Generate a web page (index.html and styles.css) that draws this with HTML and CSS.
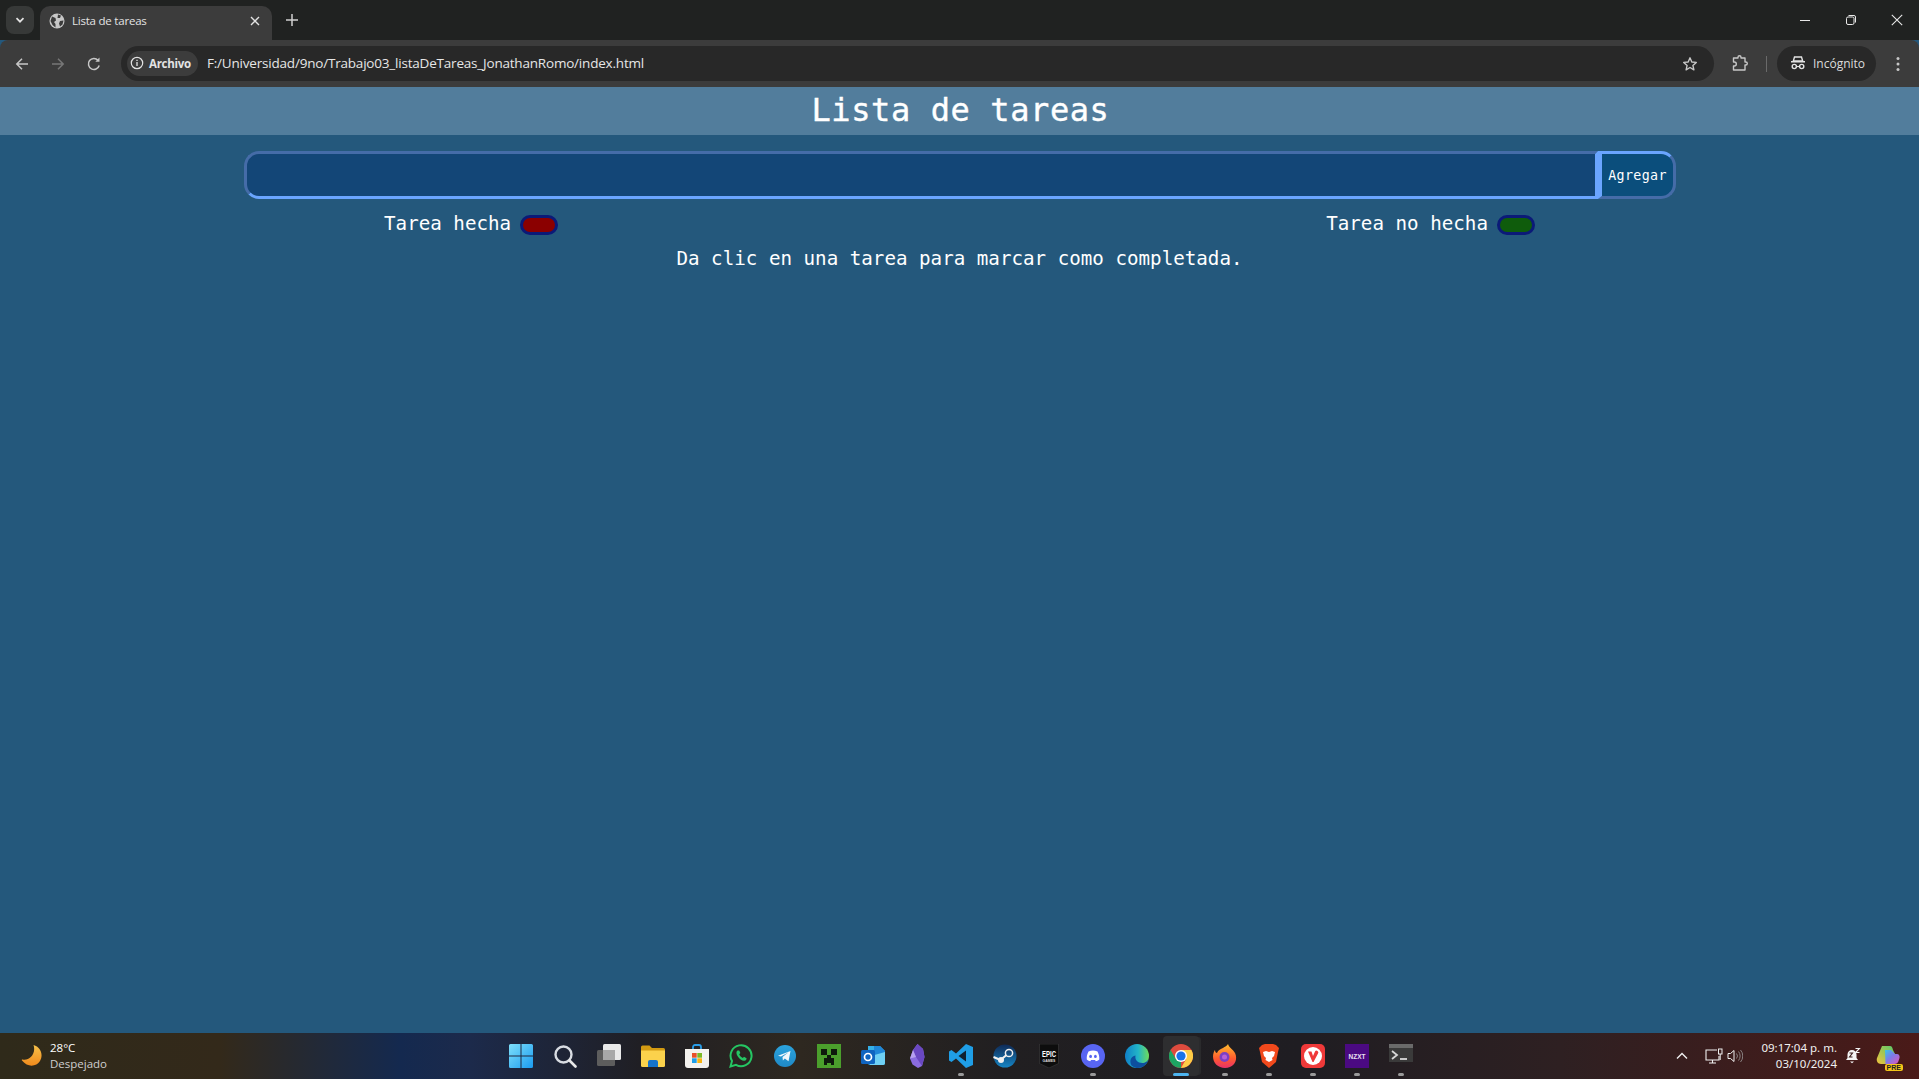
FILE: index.html
```html
<!DOCTYPE html>
<html lang="es">
<head>
<meta charset="utf-8">
<title>Lista de tareas</title>
<link rel="stylesheet" href="styles.css">
</head>
<body>
<div class="tabstrip">
  <div class="tablist"><svg width="12" height="12" viewBox="0 0 12 12"><path d="M2.5 4.2 6 7.7l3.5-3.5" fill="none" stroke="#e3e3e3" stroke-width="1.7"/></svg></div>
  <div class="tab">
    <svg class="favicon" width="16" height="16" viewBox="0 0 16 16"><circle cx="8" cy="8" r="7.5" fill="#c7c7c7"/><path d="M3 3.500 6.500 5 7 7.500 5 9l1.500 2v3.500L3.500 12 1.500 8zM9 1.500l3 1-1 2.500H8.500zM11 8l3.500-.5-1 4-2.500 2-1-3z" fill="#3c3c3c"/></svg>
    <span class="tab-title">Lista de tareas</span>
    <svg class="tab-close" width="10" height="10" viewBox="0 0 10 10"><path d="M1 1l8 8M9 1l-8 8" stroke="#e3e3e3" stroke-width="1.400"/></svg>
  </div>
  <svg class="newtab" width="12" height="12" viewBox="0 0 12 12"><path d="M6 0v12M0 6h12" stroke="#d0d0d0" stroke-width="1.500"/></svg>
  <div class="winctrl">
    <svg width="12" height="12" viewBox="0 0 12 12"><path d="M1 6.500h10" stroke="#e8e8e8"/></svg>
    <svg width="12" height="12" viewBox="0 0 12 12"><rect x="1.500" y="3" width="7.500" height="7.500" rx="1.500" fill="none" stroke="#e8e8e8"/><path d="M3.500 1.500h5.500a1.500 1.500 0 0 1 1.500 1.500v5.500" fill="none" stroke="#e8e8e8"/></svg>
    <svg width="12" height="12" viewBox="0 0 12 12"><path d="M.8.800l10.400 10.400M11.200.800.800 11.200" stroke="#e8e8e8" stroke-width="1.100"/></svg>
  </div>
</div>
<div class="toolbar">
  <svg class="navbtn" width="16" height="16" viewBox="0 0 16 16"><path d="M14 8H3M8 2.800 2.800 8 8 13.200" fill="none" stroke="#c7c7c7" stroke-width="1.500"/></svg>
  <svg class="navbtn" width="16" height="16" viewBox="0 0 16 16"><path d="M2 8h11M8 2.800 13.200 8 8 13.200" fill="none" stroke="#777" stroke-width="1.500"/></svg>
  <svg class="navbtn" width="16" height="16" viewBox="0 0 16 16"><path d="M13.200 9.500A5.500 5.500 0 1 1 12 4.200" fill="none" stroke="#c7c7c7" stroke-width="1.500"/><path d="M13.500 1.500v4.200H9.300z" fill="#c7c7c7"/></svg>
  <div class="omnibox">
    <div class="chip">
      <svg width="14" height="14" viewBox="0 0 14 14"><circle cx="7" cy="7" r="5.700" fill="none" stroke="#e3e3e3" stroke-width="1.200"/><path d="M7 6v4M7 3.800v1.300" stroke="#e3e3e3" stroke-width="1.300"/></svg>
      <span>Archivo</span>
    </div>
    <span class="url">F:/Universidad/9no/Trabajo03_listaDeTareas_JonathanRomo/index.html</span>
    <svg class="star" width="16" height="16" viewBox="0 0 16 16"><path d="M8 1.800 9.800 6l4.500.4-3.400 3 1 4.400L8 11.500l-3.900 2.300 1-4.400-3.400-3L6.200 6z" fill="none" stroke="#c7c7c7" stroke-width="1.400" stroke-linejoin="round"/></svg>
  </div>
  <svg class="ext" width="18" height="18" viewBox="0 0 18 18"><path d="M2.500 3.500H7V2.800a1.500 1.500 0 0 1 3 0v.7h4v4h.8a1.500 1.500 0 0 1 0 3H14v5H2.500v-4h.8a2 2 0 0 0 0-4h-.8z" transform="translate(0 -.5)" fill="none" stroke="#c7c7c7" stroke-width="1.400" stroke-linejoin="round"/></svg>
  <div class="sep"></div>
  <div class="incognito">
    <svg width="16" height="16" viewBox="0 0 16 16"><path d="M4.500 2h7l1.200 4H3.300zM1 6.800h14" fill="none" stroke="#e3e3e3" stroke-width="1.400"/><circle cx="4.300" cy="11.500" r="2.100" fill="none" stroke="#e3e3e3" stroke-width="1.400"/><circle cx="11.700" cy="11.500" r="2.100" fill="none" stroke="#e3e3e3" stroke-width="1.400"/><path d="M6.400 11.500h3.200" stroke="#e3e3e3" stroke-width="1.200"/></svg>
    <span>Incógnito</span>
  </div>
  <svg class="menu" width="4" height="16" viewBox="0 0 4 16"><circle cx="2" cy="2.500" r="1.500" fill="#c7c7c7"/><circle cx="2" cy="8" r="1.500" fill="#c7c7c7"/><circle cx="2" cy="13.500" r="1.500" fill="#c7c7c7"/></svg>
</div>

<main class="page">
  <header class="page-header"><h1>Lista de tareas</h1></header>
  <form class="task-form">
    <input class="task-input" type="text">
    <button class="task-add" type="button">Agregar</button>
  </form>
  <div class="legend">
    <div class="legend-item"><span class="legend-label">Tarea hecha</span><span class="pill pill-done"></span></div>
    <div class="legend-item"><span class="legend-label">Tarea no hecha</span><span class="pill pill-todo"></span></div>
  </div>
  <p class="hint">Da clic en una tarea para marcar como completada.</p>
</main>

<footer class="taskbar">
  <div class="weather">
    <svg width="24" height="24" viewBox="0 0 24 24"><defs><linearGradient id="moon" x1="0" y1="0" x2="0" y2="1"><stop offset="0" stop-color="#f6c14a"/><stop offset="1" stop-color="#f08a1c"/></linearGradient></defs><path d="M14.500 1C22 3 24.500 11 21 17c-3.500 5.500-12 7-18-.5-.5-.7 0-1 .7-.9C10 17 17.500 10 14.500 1z" fill="url(#moon)"/></svg>
    <div class="weather-text"><span class="temp">28°C</span><span class="cond">Despejado</span></div>
  </div>
  <div class="apps">
    <div class="app"><svg width="24" height="24" viewBox="0 0 24 24"><defs><linearGradient id="win" x1="0" y1="0" x2="1" y2="1"><stop offset="0" stop-color="#7fe0fb"/><stop offset="1" stop-color="#1a9bf0"/></linearGradient></defs><path d="M0 1.500A1.500 1.500 0 0 1 1.500 0h10v11.500H0zM12.500 0h10A1.500 1.500 0 0 1 24 1.500v10H12.500zM0 12.500h11.500V24h-10A1.500 1.500 0 0 1 0 22.500zM12.500 12.500H24v10a1.500 1.500 0 0 1-1.500 1.500h-10z" fill="url(#win)"/></svg></div>
    <div class="app"><svg width="24" height="24" viewBox="0 0 24 24"><circle cx="10.500" cy="10.500" r="8" fill="none" stroke="#d8dce2" stroke-width="2.400"/><path d="M16.500 16.500l6 6" stroke="#e8e8e8" stroke-width="2.600" stroke-linecap="round"/></svg></div>
    <div class="app"><svg width="24" height="24" viewBox="0 0 24 24"><rect x="6" y="0" width="18" height="16" rx="1.500" fill="#e9e9e9"/><rect x="0" y="6" width="18" height="16" rx="1.500" fill="#5d5d5d"/><rect x="6" y="6" width="12" height="10" fill="#a8a8a8"/></svg></div>
    <div class="app"><svg width="24" height="24" viewBox="0 0 24 24"><path d="M0 3a1.500 1.500 0 0 1 1.500-1.500h7L11 4h11.500A1.500 1.500 0 0 1 24 5.500V8H0z" fill="#d29a12"/><path d="M0 6.500h24v15a1.500 1.500 0 0 1-1.500 1.500h-21A1.500 1.500 0 0 1 0 21.500z" fill="#fbd24c"/><path d="M7 18a2 2 0 0 1 2-2h6a2 2 0 0 1 2 2v5H7z" fill="#1673c9"/></svg></div>
    <div class="app"><svg width="24" height="24" viewBox="0 0 24 24"><path d="M8 6V3a2 2 0 0 1 2-2h4a2 2 0 0 1 2 2v3" fill="none" stroke="#2a9ee8" stroke-width="1.800"/><path d="M0 5h24v16a3 3 0 0 1-3 3H3a3 3 0 0 1-3-3z" fill="#f4f2ee"/><rect x="7" y="9" width="4.700" height="4.700" fill="#e8502a"/><rect x="12.300" y="9" width="4.700" height="4.700" fill="#7cb925"/><rect x="7" y="14.300" width="4.700" height="4.700" fill="#1e9ee8"/><rect x="12.300" y="14.300" width="4.700" height="4.700" fill="#fbb40e"/></svg></div>
    <div class="app"><svg width="24" height="24" viewBox="0 0 24 24"><path d="M1.500 22.500l1.500-5.500a10.500 10.500 0 1 1 4 3.900z" fill="none" stroke="#25c663" stroke-width="2"/><path d="M8.500 6.500c-1.500 1-1.500 3.500.5 6.300 2 2.700 4.500 4.300 6.500 4 1.500-.3 2.300-1.500 2-2.600l-2.500-1.500-1.200 1.300c-1.500-.5-3-2.200-3.600-3.700l1.200-1.200-1.200-2.600z" fill="#25c663"/></svg></div>
    <div class="app"><svg width="24" height="24" viewBox="0 0 24 24"><defs><linearGradient id="tg" x1="0" y1="0" x2="0" y2="1"><stop offset="0" stop-color="#2ba3dd"/><stop offset="1" stop-color="#1f89c6"/></linearGradient></defs><circle cx="12" cy="12" r="11" fill="url(#tg)"/><path d="M5 11.800 17.500 7l-2 10.200-3.700-2.700-1.900 1.900-.4-3.300 6-4.800-7.500 4.300z" fill="#f2f7fb"/></svg></div>
    <div class="app"><svg width="24" height="24" viewBox="0 0 24 24"><rect width="24" height="24" fill="#4b9f2c"/><path d="M4 5h6v6H4zM14 5h6v6h-6zM10 11h4v3h3v7h-3v-2h-4v2H7v-7h3z" fill="#0e1a0c"/></svg></div>
    <div class="app"><svg width="24" height="24" viewBox="0 0 24 24"><path d="M7 2h12l5 5v12a2 2 0 0 1-2 2H9a2 2 0 0 1-2-2z" fill="#35b0e8"/><path d="M13 2h6l5 5v5H13z" fill="#1f86d8"/><path d="M10 12 24 8v11a2 2 0 0 1-2 2H9z" fill="#6fd0f4"/><rect x="0" y="6" width="14" height="14" rx="1.500" fill="#0f64c0"/><circle cx="7" cy="13" r="3.500" fill="none" stroke="#fff" stroke-width="1.700"/></svg></div>
    <div class="app"><svg width="24" height="24" viewBox="0 0 24 24"><path d="M12.500 0 18 5l1.500 8-2.500 9-4 2-5.500-3.500-2.500-6L8 6z" fill="#8b6ce0"/><path d="M12.500 0 8 6l3 7 6 9 2.500-9L18 5z" fill="#6a48c2"/><path d="M8 6l-3 8.500 6-1.500z" fill="#b7a0f0"/></svg></div>
    <div class="app app-open"><svg width="24" height="24" viewBox="0 0 24 24"><path d="M17 0l7 3v18l-7 3L7 14.500 2.500 18 0 16.500V7.500L2.500 6 7 9.500z" fill="#1f9ee6"/><path d="M17 6.500v11L9.500 12z" fill="#0f2130"/></svg></div>
    <div class="app"><svg width="24" height="24" viewBox="0 0 24 24"><defs><linearGradient id="st" x1="0" y1="0" x2="0" y2="1"><stop offset="0" stop-color="#0f2a56"/><stop offset="1" stop-color="#1685c4"/></linearGradient></defs><circle cx="12" cy="12" r="11.500" fill="url(#st)"/><circle cx="16" cy="9" r="3.600" fill="none" stroke="#f0f0f0" stroke-width="1.500"/><circle cx="8" cy="16" r="3" fill="#f0f0f0"/><path d="M.5 13l7 3 6-5" fill="none" stroke="#f0f0f0" stroke-width="2"/></svg></div>
    <div class="app"><svg width="24" height="24" viewBox="0 0 24 24"><path d="M2.500 0h19v19.500L12 24l-9.500-4.500z" fill="#0d0d0d" stroke="#444" stroke-width=".5"/><text x="12" y="8" class="epic" transform="scale(1 1.600)">EPIC</text><text x="12" y="17.500" class="epic-sub">GAMES</text></svg></div>
    <div class="app app-open"><svg width="24" height="24" viewBox="0 0 24 24"><circle cx="12" cy="12" r="12" fill="#5865f2"/><path d="M7.500 7.500c3-1.200 6-1.200 9 0 1.300 2.500 2 5 1.800 8-1.300 1-2.500 1.500-3.500 1.700l-.7-1.300H10l-.7 1.300c-1-.2-2.200-.7-3.500-1.700-.3-3 .4-5.500 1.700-8z" fill="#fff"/><ellipse cx="9.600" cy="12.400" rx="1.400" ry="1.600" fill="#5865f2"/><ellipse cx="14.400" cy="12.400" rx="1.400" ry="1.600" fill="#5865f2"/></svg></div>
    <div class="app"><svg width="24" height="24" viewBox="0 0 24 24"><defs><linearGradient id="ed" x1="0" y1="0" x2="1" y2="0"><stop offset="0" stop-color="#0f7fc8"/><stop offset=".55" stop-color="#22b5c8"/><stop offset="1" stop-color="#6fdc5a"/></linearGradient></defs><circle cx="12" cy="12" r="12" fill="url(#ed)"/><path d="M24 13.500c-1 4-4 5.500-6.500 5.500-5 0-8-3.500-7-7.500C6 12 4 17 6.500 21.500 9 23.500 11 24 13 24c5 0 10-4 11-10.500z" fill="#0d4f9f"/></svg></div>
    <div class="app app-active">
      <svg width="24" height="24" viewBox="0 0 24 24"><circle cx="12" cy="12" r="12" fill="#dd4b3e"/><path d="M12 24a12 12 0 0 1-10.400-18L6.800 15l5.200-3z" fill="#1da462"/><path d="M12 24a12 12 0 0 0 10.400-18H12l5.200 9z" fill="#ffcd46"/><circle cx="12" cy="12" r="6" fill="#fff"/><circle cx="12" cy="12" r="4.600" fill="#1a73e8"/></svg>
    </div>
    <div class="app app-open"><svg width="24" height="24" viewBox="0 0 24 24"><defs><linearGradient id="ff" x1="0" y1="0" x2="0" y2="1"><stop offset="0" stop-color="#ffbd2e"/><stop offset=".6" stop-color="#ff5b2e"/><stop offset="1" stop-color="#e8306a"/></linearGradient></defs><path d="M15 0c1 4 5 5 7 9 3 6 0 15-10 15C5 24 0 19 0 12.500 0 10 1 7 2 6c0 2 1 3 2 3 1-3 4-4 6-5 2-1.500 4-2 5-4z" fill="url(#ff)"/><circle cx="11.500" cy="13" r="5" fill="#7b3fc4"/><circle cx="11.500" cy="13" r="2.500" fill="#b65fd8"/></svg></div>
    <div class="app app-open"><svg width="24" height="24" viewBox="0 0 24 24"><path d="M5 1 8 0h8l3 1 3 3-1 4-2 10-7 6-7-6L3 8 2 4z" fill="#f1491c"/><path d="M6 8l3-1 3 1 3-1 3 1-1 4-2 2 .5 2L12 18l-3.500-2 .5-2-2-2z" fill="#fff"/></svg></div>
    <div class="app app-open"><svg width="24" height="24" viewBox="0 0 24 24"><rect width="24" height="24" rx="5" fill="#ef3939"/><circle cx="12" cy="12" r="9" fill="#fff"/><path d="M7 7.500h3.500L12 12l2-4.500a1.800 1.800 0 1 1 3 2L12.500 18h-1z" fill="#ef3939"/></svg></div>
    <div class="app app-open"><svg width="24" height="24" viewBox="0 0 24 24"><rect width="24" height="24" fill="#4b0a82"/><text x="12" y="15" class="nzxt">NZXT</text></svg></div>
    <div class="app app-open"><svg width="24" height="24" viewBox="0 0 24 24"><rect width="24" height="18" y="0" rx="1.500" fill="#3a3a3a"/><rect width="24" height="4" fill="#6a6a6a"/><rect y="4" width="24" height="14" fill="#3a3a3a"/><path d="M3 7l5 4-5 4" fill="none" stroke="#d8d8d8" stroke-width="1.800"/><path d="M11 15h7" stroke="#d8d8d8" stroke-width="1.800"/></svg></div>
  </div>
  <div class="tray">
    <svg class="tray-up" width="12" height="8" viewBox="0 0 12 8"><path d="M1 6.500 6 1.500l5 5" fill="none" stroke="#f0f0f0" stroke-width="1.400"/></svg>
    <svg class="tray-net" width="18" height="16" viewBox="0 0 18 16"><path d="M12 2H1v10h13V8M7.500 12v3M4 15h7" fill="none" stroke="#f0f0f0" stroke-width="1.100"/><rect x="13.500" y="1" width="3.500" height="5" fill="none" stroke="#f0f0f0"/><path d="M15.200 6v6" stroke="#f0f0f0"/></svg>
    <svg class="tray-vol" width="16" height="16" viewBox="0 0 16 16"><path d="M1 5.500h2.500L7 2.500v11l-3.500-3H1z" fill="none" stroke="#f0f0f0"/><path d="M9.500 5.500a4 4 0 0 1 0 5M11.500 3.500a7 7 0 0 1 0 9M13.500 2a9 9 0 0 1 0 12" fill="none" stroke="#8a8282"/></svg>
    <div class="clock"><span>09:17:04 p. m.</span><span>03/10/2024</span></div>
    <svg class="tray-bell" width="16" height="16" viewBox="0 0 16 16"><path d="M7 2a4.500 4.500 0 0 1 4.500 4.500V10l1.500 2H1l1.500-2V6.500A4.500 4.500 0 0 1 7 2z" fill="#f5f5f5"/><path d="M5 13.500h4l-2 1.800z" fill="#f5f5f5"/><path d="M4.500 5h3L4.500 9h3" fill="none" stroke="#3a1d1c" stroke-width="1.100"/><path d="M10.500 0.500h4l-4 4h4" fill="none" stroke="#f5f5f5" stroke-width="1.100"/></svg>
    <div class="copilot">
      <svg width="24" height="22" viewBox="0 0 24 22"><defs><linearGradient id="cp" x1="0" y1="0" x2="1" y2="1"><stop offset="0" stop-color="#38c6e8"/><stop offset=".45" stop-color="#7c7bea"/><stop offset="1" stop-color="#e056b8"/></linearGradient><linearGradient id="cp2" x1="0" y1="1" x2="1" y2="0"><stop offset="0" stop-color="#f2c33c"/><stop offset="1" stop-color="#54c86c"/></linearGradient></defs><path d="M6 1h8c2 0 2.500 2 3 4l2 4h-6l-2 10H5c-3 0-5-3-4-6z" fill="url(#cp2)"/><path d="M9 5h6l4 4h2c2 0 3 2 2.500 4l-1 3c-.5 2-2 3-4 3h-9z" fill="url(#cp)"/></svg>
      <span class="pre">PRE</span>
    </div>
  </div>
</footer>
</body>
</html>
```
FILE: styles.css
```css
* { box-sizing: border-box; }
html, body { margin: 0; height: 100%; }
body {
  display: flex;
  flex-direction: column;
  height: 1079px;
  overflow: hidden;
  background: #24587c;
  font-family: "Open Sans", "Noto Sans", sans-serif;
}
svg { display: block; flex: none; }

/* browser chrome */
.tabstrip {
  height: 40px;
  flex: none;
  background: #202221;
  display: flex;
  align-items: flex-end;
  position: relative;
}
.tablist {
  width: 28px;
  height: 28px;
  margin: 0 6px 6px 6px;
  border-radius: 8px;
  background: #373938;
  display: flex;
  align-items: center;
  justify-content: center;
}
.tab {
  width: 232px;
  height: 34px;
  background: #3c3c3c;
  border-radius: 10px 10px 0 0;
  display: flex;
  align-items: center;
  padding: 0 12px 5px 9px;
  color: #e3e3e3;
  font-size: 11.500px;
}
.tab-title { margin-left: 7px; flex: 1; font-family: "Open Sans", sans-serif; letter-spacing: -0.22px; }
.newtab { margin: 0 0 14px 14px; }
.winctrl {
  margin-left: auto;
  align-self: stretch;
  display: flex;
  align-items: center;
  gap: 34px;
  padding-right: 16px;
}
.toolbar {
  height: 47px;
  flex: none;
  background: #3c3c3c;
  border-radius: 8px 8px 0 0;
  display: flex;
  align-items: center;
  padding-left: 14px;
  color: #e3e3e3;
}
.navbtn { margin-right: 20px; }
.omnibox {
  margin-left: -1px;
  width: 1593px;
  height: 35px;
  background: #282828;
  border-radius: 18px;
  display: flex;
  align-items: center;
  padding: 0 16px 0 6px;
}
.chip {
  width: 71px;
  height: 25px;
  border-radius: 13px;
  background: #3c3c3c;
  display: flex;
  align-items: center;
  gap: 5px;
  padding-left: 3px;
  padding-bottom: 1px;
  font-size: 11.500px;
  font-weight: 700;
  letter-spacing: -0.3px;
  color: #e3e3e3;
}
.url {
  margin-left: 9px;
  margin-bottom: 2px;
  flex: 1;
  font-family: "Open Sans", sans-serif;
  font-size: 13.500px;
  letter-spacing: -0.2px;
  color: #e6e6e6;
}
.ext { margin-left: 17px; }
.sep { width: 1px; height: 16px; background: #6a6a6a; margin-left: 17px; }
.incognito {
  margin-left: 10px;
  width: 99px;
  height: 35px;
  border-radius: 18px;
  background: #282828;
  display: flex;
  align-items: center;
  gap: 7px;
  padding-left: 13px;
  padding-bottom: 1px;
  font-size: 12px;
  color: #dcdcdc;
}
.menu { margin-left: 20px; }

/* page */
.page {
  flex: 1;
  min-height: 0;
  color: #fff;
  font-family: "DejaVu Sans Mono", monospace;
}
.page-header {
  height: 48px;
  background: #527d9c;
  display: flex;
  align-items: center;
  justify-content: center;
  padding: 0 0 2px 2px;
}
.page-header h1 { margin: 0; font-size: 32px; font-weight: 400; letter-spacing: .6px; -webkit-text-stroke: .4px #fff; }
.task-form {
  width: 1432px;
  height: 48px;
  margin: 16px 0 0 244px;
  display: flex;
}
.task-input {
  flex: 1;
  min-width: 0;
  background: #134677;
  border: 3px solid;
  border-color: #456ca8 #6aa5ff #6aa5ff #456ca8;
  border-radius: 15px 0 0 15px;
  outline: none;
}
.task-add {
  width: 78px;
  background: #0b4e7c;
  border: 3px solid;
  border-color: #6aa5ff #456ca8 #456ca8 #6aa5ff;
  border-left-width: 4px;
  border-radius: 0 15px 15px 0;
  padding: 0;
  color: #fff;
  font-family: "DejaVu Sans Mono", monospace;
  font-size: 13.300px;
  letter-spacing: .35px;
}
.legend {
  display: flex;
  justify-content: space-around;
  margin-top: 14px;
  font-size: 19.200px;
  line-height: 24px;
}
.legend-item { display: flex; align-items: center; gap: 9px; }
.legend-label { position: relative; top: -1px; }
.pill {
  width: 38px;
  height: 20px;
  border: 3px solid #0b1a78;
  border-radius: 10px;
}
.pill-done { background: #8b0000; }
.pill-todo { background: #0f5c0c; }
.hint {
  margin: 10px 0 0;
  text-align: center;
  font-size: 19.200px;
  line-height: 24px;
}

/* taskbar */
.taskbar {
  height: 46px;
  flex: none;
  display: flex;
  align-items: center;
  background: linear-gradient(90deg, #2f2a1a 0, #33291a 220px, #14294f 400px, #1c2a4b 470px, #201f24 640px, #2e2820 800px, #211f21 1000px, #1f1d22 1300px, #2e2022 1560px, #4a1a18 1919px);
}
.weather {
  width: 499px;
  display: flex;
  align-items: center;
  gap: 7px;
  padding-left: 19px;
  flex: none;
}
.weather-text { display: flex; flex-direction: column; font-size: 11.500px; line-height: 16px; }
.temp { color: #fff; }
.cond { color: #cfcfcf; }
.apps { display: flex; }
.app {
  width: 44px;
  height: 40px;
  display: flex;
  align-items: center;
  justify-content: center;
  position: relative;
  border-radius: 4px;
}
.app-open::after, .app-active::after {
  content: "";
  position: absolute;
  left: 50%;
  bottom: 0;
  width: 6px;
  height: 3px;
  margin-left: -3px;
  border-radius: 2px;
  background: #9a9a9a;
}
.app-active { background: #2e2e30; width: 36px; margin: 0 4px; box-shadow: 3px 0 0 -1px #2a2a2c; }
.app-active::after { width: 16px; margin-left: -8px; background: #4db4f0; }
.epic { font: 700 6px "Liberation Sans", sans-serif; fill: #fff; text-anchor: middle; }
.epic-sub { font: 700 3.500px "Liberation Sans", sans-serif; fill: #ddd; text-anchor: middle; }
.nzxt { font: 700 6.500px "Liberation Sans", sans-serif; fill: #e8e0f0; text-anchor: middle; }
.tray {
  margin-left: auto;
  display: flex;
  align-items: center;
  color: #f0f0f0;
}
.tray-vol { margin-left: 4px; }
.tray-net { margin-left: 17px; }
.clock {
  margin-left: 18px;
  display: flex;
  flex-direction: column;
  align-items: flex-end;
  font-family: "Noto Sans", sans-serif;
  font-size: 11.500px;
  line-height: 16px;
}
.tray-bell { margin-left: 8px; }
.copilot { position: relative; margin-left: 15px; margin-right: 19px; }
.pre {
  position: absolute;
  right: -3px;
  bottom: -4px;
  background: #f5c518;
  color: #222;
  font: 700 7px "Liberation Sans", sans-serif;
  padding: 0 2px;
  border-radius: 2px;
}
```
